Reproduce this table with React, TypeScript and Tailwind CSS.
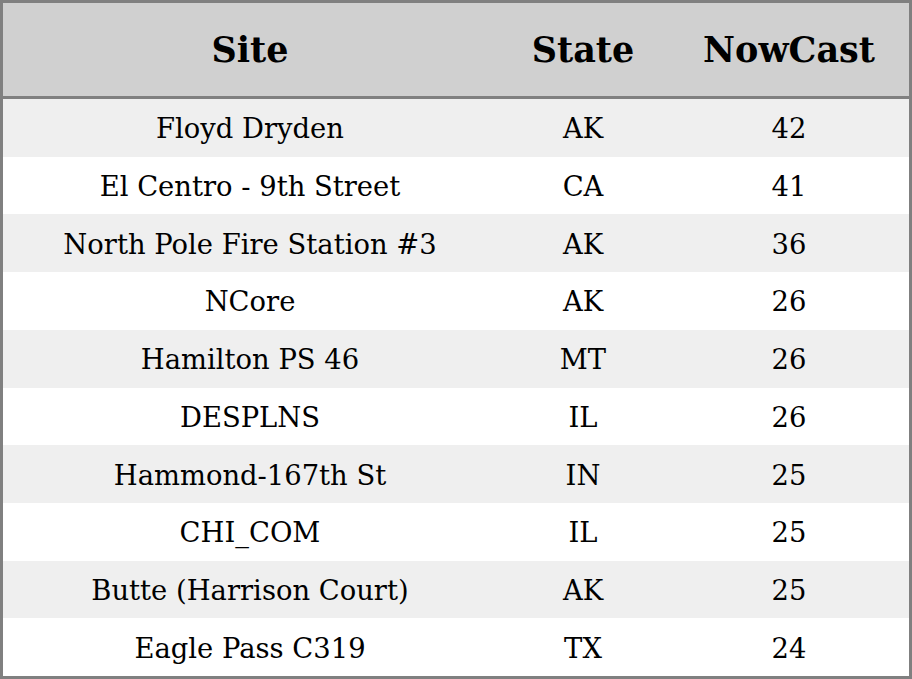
const rows = [
  { site: "Floyd Dryden", state: "AK", nowcast: 42 },
  { site: "El Centro - 9th Street", state: "CA", nowcast: 41 },
  { site: "North Pole Fire Station #3", state: "AK", nowcast: 36 },
  { site: "NCore", state: "AK", nowcast: 26 },
  { site: "Hamilton PS 46", state: "MT", nowcast: 26 },
  { site: "DESPLNS", state: "IL", nowcast: 26 },
  { site: "Hammond-167th St", state: "IN", nowcast: 25 },
  { site: "CHI_COM", state: "IL", nowcast: 25 },
  { site: "Butte (Harrison Court)", state: "AK", nowcast: 25 },
  { site: "Eagle Pass C319", state: "TX", nowcast: 24 },
];

export default function App() {
  return (
    <div className="w-[912px] h-[679px] bg-white border-[3px] border-[#808080] flex flex-col text-black font-['DejaVu_Serif',serif]">
      {/* Header */}
      <div className="h-[96px] shrink-0 flex bg-[#d0d0d0] border-b-[3px] border-[#808080] text-[35px] font-bold pt-[2px]">
        <div className="w-[494px] flex items-center justify-center">Site</div>
        <div className="w-[172px] flex items-center justify-center">State</div>
        <div className="flex-1 flex items-center justify-center">NowCast</div>
      </div>

      {/* Body */}
      <div className="flex-1 flex flex-col text-[27.4px]">
        {rows.map((r, i) => (
          <div
            key={r.site}
            className={`flex-1 flex pt-[2px] ${i % 2 === 0 ? "bg-[#efefef]" : "bg-white"}`}
          >
            <div className="w-[494px] flex items-center justify-center">{r.site}</div>
            <div className="w-[172px] flex items-center justify-center">{r.state}</div>
            <div className="flex-1 flex items-center justify-center">{r.nowcast}</div>
          </div>
        ))}
      </div>
    </div>
  );
}
